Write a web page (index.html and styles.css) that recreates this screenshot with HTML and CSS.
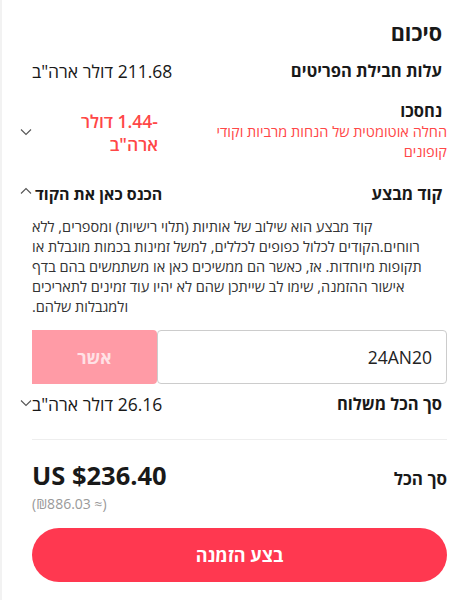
FILE: index.html
```html
<!DOCTYPE html>
<html lang="he" dir="rtl">
<head>
    <meta charset="UTF-8">
    <meta name="viewport" content="width=device-width, initial-scale=1.0">
    <title>סיכום</title>
    <link rel="stylesheet" href="styles.css">
</head>
<body>
    <div class="summary">
        <h1 class="title">סיכום</h1>

        <div class="row row-items">
            <div class="label">עלות חבילת הפריטים</div>
            <div class="value">211.68 דולר ארה"ב</div>
        </div>

        <div class="row row-discount">
            <div class="label">
                נחסכו
                <div class="note">החלה אוטומטית של הנחות מרביות וקודי קופונים</div>
            </div>
            <div class="value value-red">-1.44 דולר ארה"ב</div>
            <svg class="chevron chevron-mid" width="12" height="8" viewBox="0 0 12 8"><path d="M1 1.5 6 6.5 11 1.5" fill="none" stroke="#555" stroke-width="1.1"/></svg>
        </div>

        <div class="row row-promo">
            <div class="label">קוד מבצע</div>
            <div class="value value-bold">הכנס כאן את הקוד</div>
            <svg class="chevron chevron-up" width="12" height="8" viewBox="0 0 12 8"><path d="M1 6.5 6 1.5 11 6.5" fill="none" stroke="#555" stroke-width="1.1"/></svg>
        </div>

        <p class="promo-text">קוד מבצע הוא שילוב של אותיות (תלוי רישיות) ומספרים, ללא רווחים.הקודים לכלול כפופים לכללים, למשל זמינות בכמות מוגבלת או תקופות מיוחדות. אז, כאשר הם ממשיכים כאן או משתמשים בהם בדף אישור ההזמנה, שימו לב שייתכן שהם לא יהיו עוד זמינים לתאריכים ולמגבלות שלהם.</p>

        <div class="promo-form">
            <input class="promo-input" type="text" value="24AN20">
            <button class="btn-apply">אשר</button>
        </div>

        <div class="row row-shipping">
            <div class="label">סך הכל משלוח</div>
            <div class="value">26.16 דולר ארה"ב</div>
            <svg class="chevron chevron-top" width="12" height="8" viewBox="0 0 12 8"><path d="M1 1.5 6 6.5 11 1.5" fill="none" stroke="#555" stroke-width="1.1"/></svg>
        </div>

        <div class="divider"></div>

        <div class="total">
            <div class="total-label">סך הכל</div>
            <div class="total-value">
                <div class="total-price" dir="ltr">US $236.40</div>
                <div class="total-local" dir="ltr">(₪886.03 ≈)</div>
            </div>
        </div>

        <button class="btn-order">בצע הזמנה</button>
    </div>
</body>
</html>
```

FILE: styles.css
```css
* {
    margin: 0;
    padding: 0;
    box-sizing: border-box;
}

body {
    font-family: "Open Sans", "Noto Sans", Arial, sans-serif;
    background-color: #f2f2f2;
    color: #191919;
}

.summary {
    margin-left: 2px;
    min-height: 600px;
    background: white;
    padding: 19px 18px 0 30px;
}

.title {
    font-size: 21.5px;
    font-weight: 700;
    line-height: 28px;
    padding-right: 5px;
    margin-bottom: 12px;
}

.row {
    position: relative;
    display: flex;
    justify-content: space-between;
    align-items: flex-start;
    gap: 20px;
}

.label {
    font-size: 16.5px;
    font-weight: 700;
    line-height: 24px;
    padding-right: 5px;
}

.value {
    font-size: 17.5px;
    font-weight: 500;
    line-height: 24px;
}

.row-items {
    margin-bottom: 17px;
}

.row-discount {
    margin-bottom: 20px;
}

.row-discount .label {
    flex: 0 0 238px;
    line-height: 22px;
}

.note {
    margin-right: -5px;
    font-size: 14.5px;
    font-weight: 400;
    line-height: 20px;
    color: #ff4747;
}

.row-discount .value {
    flex: 0 1 126px;
    margin-top: 10px;
}

.value-red {
    color: #ff4747;
    font-weight: 600;
    line-height: 23px;
}

.value-bold {
    font-size: 16px;
    font-weight: 700;
    margin-left: 3px;
}

.chevron {
    position: absolute;
    left: -12px;
}

.chevron-mid {
    top: 28px;
}

.chevron-up {
    top: 5px;
}

.chevron-top {
    top: 7px;
}

.row-promo {
    margin-bottom: 11px;
}

.promo-text {
    font-size: 14.5px;
    line-height: 20px;
    color: #333;
    text-align: left;
    padding-right: 12px;
    margin-bottom: 13px;
}

.promo-form {
    display: flex;
    height: 54px;
    margin-bottom: 8px;
}

.promo-input {
    flex: 1;
    min-width: 0;
    border: 1px solid #ccc;
    border-radius: 4px;
    padding: 0 14px;
    font-family: inherit;
    font-size: 17.5px;
    color: #222;
    direction: rtl;
    outline: none;
}

.btn-apply {
    width: 125px;
    border: none;
    border-radius: 0 4px 4px 0;
    background: #ff9ba6;
    color: #ffe1e5;
    font-family: inherit;
    font-size: 17.5px;
    font-weight: 700;
}

.row-shipping {
    margin-bottom: 23px;
}

.divider {
    height: 1px;
    background: #eee;
    margin-bottom: 20px;
}

.total {
    display: flex;
    justify-content: space-between;
    align-items: flex-start;
    margin-bottom: 15px;
}

.total-label {
    font-size: 17px;
    font-weight: 700;
    line-height: 24px;
    margin-top: 7px;
}

.total-price {
    font-size: 25.5px;
    font-weight: 700;
    line-height: 30px;
}

.total-local {
    margin-top: 5px;
    font-size: 14px;
    color: #999;
    line-height: 18px;
}

.btn-order {
    display: block;
    width: 100%;
    height: 54px;
    border: none;
    border-radius: 27px;
    background: #ff3850;
    color: white;
    font-family: inherit;
    font-size: 18px;
    font-weight: 700;
}
```
